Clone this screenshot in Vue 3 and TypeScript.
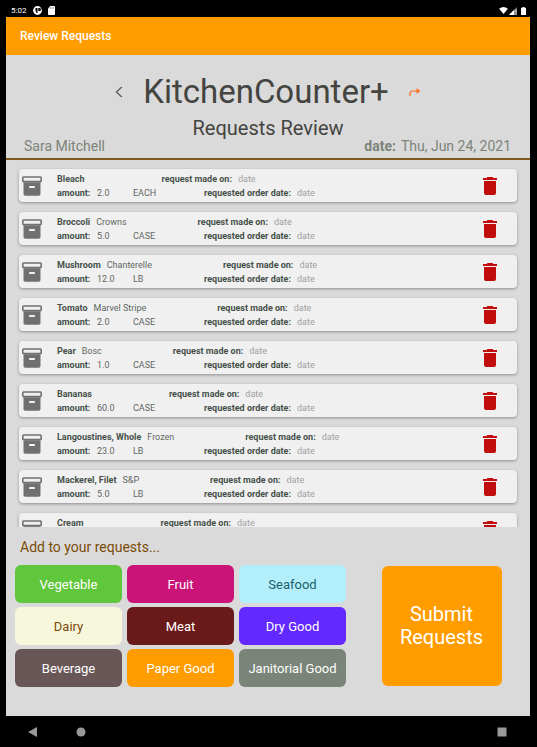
<script setup lang="ts">
interface RequestItem {
  name: string
  variety?: string
  amount?: string
  unit?: string
}

interface Category {
  label: string
  tone: string
}

const requests: RequestItem[] = [
  { name: 'Bleach', amount: '2.0', unit: 'EACH' },
  { name: 'Broccoli', variety: 'Crowns', amount: '5.0', unit: 'CASE' },
  { name: 'Mushroom', variety: 'Chanterelle', amount: '12.0', unit: 'LB' },
  { name: 'Tomato', variety: 'Marvel Stripe', amount: '2.0', unit: 'CASE' },
  { name: 'Pear', variety: 'Bosc', amount: '1.0', unit: 'CASE' },
  { name: 'Bananas', amount: '60.0', unit: 'CASE' },
  { name: 'Langoustines, Whole', variety: 'Frozen', amount: '23.0', unit: 'LB' },
  { name: 'Mackerel, Filet', variety: 'S&P', amount: '5.0', unit: 'LB' },
  { name: 'Cream' },
]

const categories: Category[] = [
  { label: 'Vegetable', tone: 'vegetable' },
  { label: 'Fruit', tone: 'fruit' },
  { label: 'Seafood', tone: 'seafood' },
  { label: 'Dairy', tone: 'dairy' },
  { label: 'Meat', tone: 'meat' },
  { label: 'Dry Good', tone: 'dry' },
  { label: 'Beverage', tone: 'beverage' },
  { label: 'Paper Good', tone: 'paper' },
  { label: 'Janitorial Good', tone: 'janitorial' },
]
</script>

<template>
  <div class="device">
    <div class="status">
      <span class="clock">5:02</span>
      <svg class="status-app" viewBox="0 0 9 9" aria-hidden="true">
        <circle cx="4.5" cy="4.5" r="4.4" fill="#fff" />
        <path d="M2.5 1.9h2v5.2h-1.2v-1.7h-.8zM5.3 1.9h1.2a1.5 1.5 0 0 1 0 3.1h-1.2z" fill="#000" />
      </svg>
      <svg class="status-card" viewBox="0 0 7 9" aria-hidden="true">
        <path d="M2.4 0h3.8q.8 0 .8.8v7.4q0 .8-.8.8h-5.4q-.8 0-.8-.8v-5.8z" fill="#fff" />
        <path d="M2.3 1.3v1.4M3.8 1.3v1.4M5.3 1.3v1.4" stroke="#555" stroke-width=".7" />
      </svg>
      <span class="spacer"></span>
      <svg class="wifi" viewBox="0 0 10 8" aria-hidden="true">
        <path d="M0 2.1Q5-1.9 10 2.1L5 8z" fill="#fff" />
      </svg>
      <svg class="signal" viewBox="0 0 8 8" aria-hidden="true">
        <path d="M0 8L8 0v8z" fill="#777" />
        <path d="M0 8L5.2 2.8V8zM6.6 2.6h.8v3h-.8zM6.6 6.6h.8v1h-.8z" fill="#fff" />
      </svg>
      <svg class="battery" viewBox="0 0 5 8" aria-hidden="true">
        <path d="M1.5 0h2v.8h1q.5 0 .5.5v6.2q0 .5-.5.5h-4q-.5 0-.5-.5V1.3q0-.5.5-.5h1z" fill="#fff" />
      </svg>
    </div>

    <header class="appbar">Review Requests</header>

    <main class="screen">
      <section class="heading">
        <div class="brand">
          <button class="icon-button" type="button" aria-label="Back">
            <svg class="back" viewBox="0 0 8 12" aria-hidden="true">
              <path d="M6.8 1L1.4 6l5.4 5" fill="none" stroke="#555" stroke-width="1.2" />
            </svg>
          </button>
          <h1>KitchenCounter+</h1>
          <button class="icon-button" type="button" aria-label="Forward">
            <svg class="forward" viewBox="0 0 12 10" aria-hidden="true">
              <path d="M1 9V6.6q0-2.6 2.6-2.6H8" fill="none" stroke="#ff6d1f" stroke-width="1.2" />
              <path d="M7.6 1L11.4 4 7.6 7z" fill="#ff6d1f" />
            </svg>
          </button>
        </div>
        <h2>Requests Review</h2>
        <div class="meta">
          <span>Sara Mitchell</span>
          <span class="today"><b>date:</b><span>Thu, Jun 24, 2021</span></span>
        </div>
      </section>

      <ul class="list">
        <li v-for="item in requests" :key="item.name" class="card">
          <svg class="box" viewBox="0 0 20 20" aria-hidden="true">
            <rect x=".8" y="1" width="18.4" height="4.6" rx=".8" fill="#f0f0f0" stroke="#707070" stroke-width="1.6" />
            <path d="M1.5 6.2h17V18q0 1.7-1.7 1.7H3.2q-1.7 0-1.7-1.7z" fill="#707070" />
            <rect x="7" y="10" width="6" height="2" rx=".4" fill="#f0f0f0" />
          </svg>
          <div class="details">
            <div class="line">
              <b>{{ item.name }}</b>
              <span>{{ item.variety }}</span>
              <b class="made">request made on:</b>
              <span class="date">date</span>
            </div>
            <div v-if="item.amount" class="line quantities">
              <b>amount:</b>
              <span>{{ item.amount }}</span>
              <span>{{ item.unit }}</span>
              <b>requested order date:</b>
              <span class="date">date</span>
            </div>
          </div>
          <button class="icon-button" type="button" :aria-label="`Delete ${item.name}`">
            <svg class="trash" viewBox="0 0 14 18" aria-hidden="true">
              <path d="M0 1h3.5l1-1h5l1 1H14v2H0zM1 4h12v12q0 2-2 2H3q-2 0-2-2z" fill="#c20d0d" />
            </svg>
          </button>
        </li>
      </ul>

      <section class="add">
        <h3>Add to your requests...</h3>
        <div class="actions">
          <div class="categories">
            <button
              v-for="category in categories"
              :key="category.tone"
              type="button"
              class="category"
              :class="category.tone"
            >
              {{ category.label }}
            </button>
          </div>
          <div class="submit-area">
            <button class="submit" type="button">Submit Requests</button>
          </div>
        </div>
      </section>
    </main>

    <nav class="system">
      <button class="icon-button" type="button" aria-label="System back">
        <svg class="nav-icon" viewBox="0 0 10 10" aria-hidden="true"><path d="M0 5L9 0v10z" fill="#999" /></svg>
      </button>
      <button class="icon-button" type="button" aria-label="Home">
        <svg class="nav-icon" viewBox="0 0 10 10" aria-hidden="true"><circle cx="5" cy="5" r="4.5" fill="#999" /></svg>
      </button>
      <span class="spacer"></span>
      <button class="icon-button" type="button" aria-label="Overview">
        <svg class="nav-icon" viewBox="0 0 10 10" aria-hidden="true"><rect x=".5" y=".5" width="9" height="9" fill="#999" /></svg>
      </button>
    </nav>
  </div>
</template>

<style>
body {
  margin: 0;
  background: #000;
}
</style>

<style scoped>
.device {
  display: flex;
  flex-direction: column;
  box-sizing: border-box;
  height: 100vh;
  padding: 4px 7px 0 6px;
  background: #000;
  font-family: Roboto, "Liberation Sans", sans-serif;
}

h1,
h2,
h3,
ul {
  margin: 0;
  padding: 0;
  font-weight: 400;
}

svg {
  display: block;
}

button {
  margin: 0;
  padding: 0;
  border: 0;
  font: inherit;
  cursor: pointer;
}

.icon-button {
  background: none;
}

.spacer {
  flex: 1;
}

.status {
  display: flex;
  align-items: center;
  height: 13px;
  padding: 0 4px 0 5px;
  color: #fff;
  font-size: 8px;
}

.clock {
  margin-right: 7px;
}

.status-app {
  width: 9px;
  height: 9px;
  margin-right: 6px;
}

.status-card {
  width: 7px;
  height: 9px;
}

.wifi {
  width: 9px;
  height: 7px;
}

.signal {
  width: 8px;
  height: 8px;
  margin: 0 4px 0 1px;
}

.battery {
  width: 5px;
  height: 8px;
}

.appbar {
  padding: 1px 14px 0;
  background: #ff9c00;
  color: #fff;
  font-size: 12px;
  font-weight: 500;
  line-height: 37px;
}

.screen {
  display: flex;
  flex: 1;
  flex-direction: column;
  min-height: 0;
  background: #dadada;
}

.heading {
  padding: 16px 0 5px;
  border-bottom: 2px solid #83591c;
  color: #444440;
  text-align: center;
}

.brand {
  display: flex;
  align-items: center;
  justify-content: center;
  gap: 20px;
}

h1 {
  font-size: 33px;
  line-height: 42px;
}

.back {
  width: 8px;
  height: 12px;
}

.forward {
  width: 12px;
  height: 10px;
}

h2 {
  margin-top: 4px;
  font-size: 20px;
  line-height: 22px;
}

.meta {
  display: flex;
  justify-content: space-between;
  padding: 0 19px 0 18px;
  color: #7a8478;
  font-size: 14px;
  line-height: 14px;
}

.today {
  display: flex;
  gap: 5px;
}

.list {
  display: flex;
  flex: 1;
  flex-direction: column;
  gap: 10px;
  min-height: 0;
  padding: 9px 13px 0;
  overflow-y: auto;
  scrollbar-width: none;
  list-style: none;
}

.card {
  display: flex;
  flex: none;
  align-items: center;
  height: 33px;
  padding: 0 20px 0 3px;
  border-radius: 4px;
  background: #f0f0f0;
  box-shadow: 0 1px 3px rgba(0, 0, 0, 0.35);
}

.box {
  width: 20px;
  height: 20px;
}

.details {
  flex: 1;
  align-self: flex-start;
  margin-left: 15px;
  padding-top: 3px;
  color: #5f6862;
  font-size: 9px;
  line-height: 14px;
  white-space: nowrap;
}

.details b {
  color: #46504a;
}

.line {
  display: flex;
  gap: 6px;
}

.line .made {
  margin-left: 65px;
}

.quantities {
  display: grid;
  grid-template-columns: 34px 30px 65px auto 1fr;
}

.date {
  color: #a0a0a0;
}

.trash {
  width: 14px;
  height: 18px;
}

.add {
  padding: 10px 9px 29px;
}

h3 {
  padding: 0 5px;
  color: #7a4c0a;
  font-size: 14px;
  line-height: 20px;
}

.actions {
  display: grid;
  grid-template-columns: 331fr 175fr;
  margin-top: 8px;
}

.categories {
  display: grid;
  grid-template-columns: repeat(3, 1fr);
  gap: 4px 5px;
}

.category {
  height: 38px;
  border-radius: 6px;
  color: #fff;
  font-size: 13px;
  white-space: nowrap;
}

.vegetable { background: #60c63c; }
.fruit { background: #cb1477; }
.seafood { background: #b2effa; color: #20606c; }
.dairy { background: #f7f7dc; color: #7a4c0a; }
.meat { background: #6b1a1a; }
.dry { background: #6429ff; }
.beverage { background: #695757; }
.paper { background: #ff9c00; }
.janitorial { background: #7a8478; }

.submit-area {
  display: flex;
  align-items: center;
  justify-content: center;
  padding-left: 16px;
}

.submit {
  width: 120px;
  height: 120px;
  border-radius: 6px;
  background: #ff9c00;
  color: #fff;
  font-size: 20px;
  line-height: 23px;
}

.system {
  display: flex;
  align-items: center;
  gap: 38px;
  height: 31px;
  padding: 0 23px 0 22px;
}

.nav-icon {
  width: 10px;
  height: 10px;
}
</style>
